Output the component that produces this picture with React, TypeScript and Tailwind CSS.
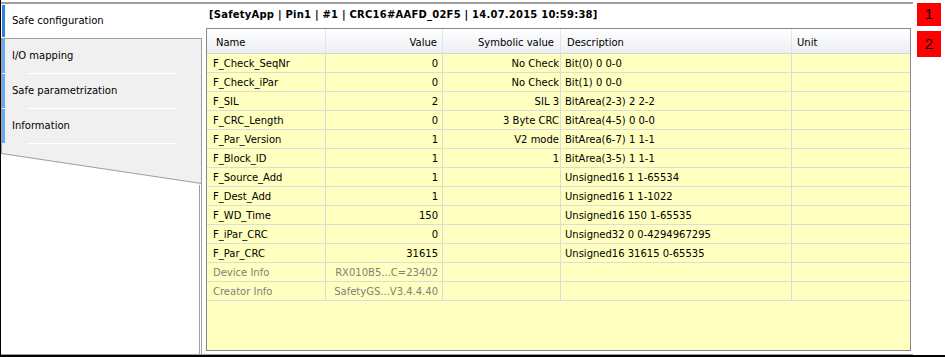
import React from "react";

type Row = { name: string; value: string; sym: string; desc: string; dim?: boolean };

const rows: Row[] = [
  { name: "F_Check_SeqNr", value: "0", sym: "No Check", desc: "Bit(0) 0 0-0" },
  { name: "F_Check_iPar", value: "0", sym: "No Check", desc: "Bit(1) 0 0-0" },
  { name: "F_SIL", value: "2", sym: "SIL 3", desc: "BitArea(2-3) 2 2-2" },
  { name: "F_CRC_Length", value: "0", sym: "3 Byte CRC", desc: "BitArea(4-5) 0 0-0" },
  { name: "F_Par_Version", value: "1", sym: "V2 mode", desc: "BitArea(6-7) 1 1-1" },
  { name: "F_Block_ID", value: "1", sym: "1", desc: "BitArea(3-5) 1 1-1" },
  { name: "F_Source_Add", value: "1", sym: "", desc: "Unsigned16 1 1-65534" },
  { name: "F_Dest_Add", value: "1", sym: "", desc: "Unsigned16 1 1-1022" },
  { name: "F_WD_Time", value: "150", sym: "", desc: "Unsigned16 150 1-65535" },
  { name: "F_iPar_CRC", value: "0", sym: "", desc: "Unsigned32 0 0-4294967295" },
  { name: "F_Par_CRC", value: "31615", sym: "", desc: "Unsigned16 31615 0-65535" },
  { name: "Device Info", value: "RX010B5...C=23402", sym: "", desc: "", dim: true },
  { name: "Creator Info", value: "SafetyGS...V3.4.4.40", sym: "", desc: "", dim: true },
];

const tabs = ["I/O mapping", "Safe parametrization", "Information"];

export default function App() {
  return (
    <div className="w-[945px] h-[357px] bg-white border-l border-b-2 border-black flex overflow-hidden font-['DejaVu_Sans',sans-serif] text-[10px] text-black">
      {/* main area */}
      <div className="w-[912px] flex flex-col">
        <div className="h-[2px]" />
        <div className="h-[2px] bg-[#a0a0a0]" />
        <div className="h-[350px] flex">
          {/* sidebar */}
          <div className="w-[201px] flex flex-col">
            <div className="h-[34px] flex bg-white">
              <div className="w-[3px] ml-[1px] my-[1px] bg-[#2f7fe0]" />
              <div className="pl-[7px] pb-[2px] flex items-center whitespace-nowrap">Safe configuration</div>
            </div>
            <div className="border-t border-l border-r border-[#a0a0a0] bg-[#f0f0f0] flex flex-col">
              {tabs.map((t) => (
                <div key={t} className="h-[35px] flex flex-col">
                  <div className="h-[34px] flex">
                    <div className="w-[3px] bg-[#6aa8ec]" />
                    <div className="pl-[7px] pb-[1px] flex items-center whitespace-nowrap">{t}</div>
                  </div>
                  <div className="h-px ml-[25px] w-[150px] bg-white" />
                </div>
              ))}
            </div>
            <svg width="201" height="41" className="block">
              <polygon points="0,0 201,0 201,40 0,10" fill="#f0f0f0" />
              <line x1="0.5" y1="0" x2="0.5" y2="10" stroke="#a0a0a0" />
              <line x1="200.5" y1="0" x2="200.5" y2="41" stroke="#a0a0a0" />
              <line x1="0.5" y1="9.5" x2="200.5" y2="39.5" stroke="#a0a0a0" />
            </svg>
            <div className="flex-1 flex justify-end">
              <div className="w-[3px] border-l border-r border-[#a0a0a0]" />
            </div>
          </div>

          {/* content panel */}
          <div className="flex-1 flex flex-col bg-white">
            <div className="h-[24px] pl-[7px] pt-[4px] leading-[13px] font-bold tracking-[0.22px] whitespace-nowrap">
              [SafetyApp | Pin1 | #1 | CRC16#AAFD_02F5 | 14.07.2015 10:59:38]
            </div>
            <div className="ml-[4px] w-[705px] h-[323px] border border-[#828790] bg-[#ffffc0] flex flex-col">
              {/* header */}
              <div className="h-[25px] flex border-b border-[#d5d5d5] bg-gradient-to-b from-white to-[#eceef2]">
                <div className="w-[119px] border-r border-[#e2e3e6] pl-[9px] pt-[2px] flex items-center">Name</div>
                <div className="w-[117px] border-r border-[#e2e3e6] pr-[5px] pt-[2px] flex items-center justify-end">Value</div>
                <div className="w-[118px] border-r border-[#e2e3e6] pr-[6px] pt-[2px] flex items-center justify-end">Symbolic value</div>
                <div className="w-[231px] border-r border-[#e2e3e6] pl-[6px] pt-[2px] flex items-center">Description</div>
                <div className="flex-1 pl-[5px] pt-[2px] flex items-center">Unit</div>
              </div>
              {rows.map((r) => (
                <div
                  key={r.name}
                  className={`h-[19px] flex border-b border-[#dcdcdc] ${r.dim ? "text-[#808080]" : "text-black"}`}
                >
                  <div className="w-[119px] border-r border-[#dcdcdc] pl-[6px] flex items-center whitespace-nowrap">{r.name}</div>
                  <div className="w-[117px] border-r border-[#dcdcdc] pr-[4px] flex items-center justify-end whitespace-nowrap">{r.value}</div>
                  <div className="w-[118px] border-r border-[#dcdcdc] pr-[1px] flex items-center justify-end whitespace-nowrap">{r.sym}</div>
                  <div className="w-[231px] border-r border-[#dcdcdc] pl-[4px] flex items-center whitespace-nowrap">{r.desc}</div>
                  <div className="flex-1" />
                </div>
              ))}
            </div>
          </div>
        </div>
        <div className="h-px bg-[#a0a0a0]" />
      </div>

      {/* right column */}
      <div className="w-[32px] pt-[3px] pl-[4px] flex flex-col font-['Liberation_Sans',sans-serif] text-[15px]">
        <div className="w-[24px] h-[23px] bg-[#ff0000] flex items-center justify-center">1</div>
        <div className="w-[24px] h-[26px] mt-[5px] bg-[#ff0000] flex items-center justify-center">2</div>
      </div>
    </div>
  );
}
